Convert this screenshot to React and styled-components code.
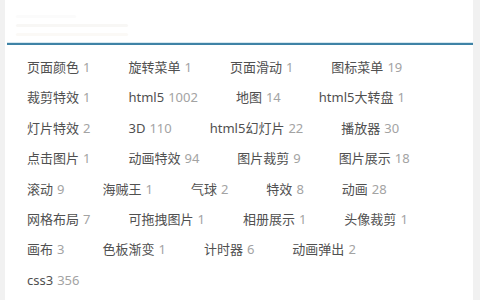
import React from 'react'
import styled, { createGlobalStyle } from 'styled-components'

const GlobalStyle = createGlobalStyle`
  html, body {
    margin: 0;
    padding: 0;
    background: #f1f1f1;
    font-family: "Noto Sans", "Noto Sans CJK SC", sans-serif;
  }
`;

const Panel = styled.div`
  margin: 0 7px 0 5px;
  height: 300px;
  background: #fff;
  overflow: hidden;
`;

const Header = styled.div`
  height: 43px;
  padding: 15px 0 0 11px;
  box-sizing: border-box;
  display: flex;
  flex-direction: column;
  gap: 6px;
`;

const FadedBar = styled.div`
  height: 3px;
  width: ${p => p.$w}px;
  background: ${p => p.$c};
  border-radius: 2px;
`;

const Divider = styled.div`
  margin-left: 2px;
  height: 2px;
  background: #3f83a6;
  box-shadow: 0 -1px 0 #d6e7ef;
`;

const TagList = styled.div`
  padding: 7px 13px 0 22px;
  line-height: 30.4px;
  font-size: 13px;
`;

const Tag = styled.a`
  display: inline-block;
  margin-right: 38px;
  color: #505050;
  text-decoration: none;
  white-space: nowrap;
`;

const Count = styled.span`
  color: #a3a3a3;
  margin-left: 4px;
`;

const tags = [
  ['页面颜色', 1], ['旋转菜单', 1], ['页面滑动', 1], ['图标菜单', 19],
  ['裁剪特效', 1], ['html5', 1002], ['地图', 14], ['html5大转盘', 1],
  ['灯片特效', 2], ['3D', 110], ['html5幻灯片', 22], ['播放器', 30],
  ['点击图片', 1], ['动画特效', 94], ['图片裁剪', 9], ['图片展示', 18],
  ['滚动', 9], ['海贼王', 1], ['气球', 2], ['特效', 8], ['动画', 28],
  ['网格布局', 7], ['可拖拽图片', 1], ['相册展示', 1], ['头像裁剪', 1],
  ['画布', 3], ['色板渐变', 1], ['计时器', 6], ['动画弹出', 2],
  ['css3', 356],
];

const App = () => {
  return (
    <>
      <GlobalStyle />
      <Panel>
        <Header>
          <FadedBar $w={60} $c="#fbfbfb" />
          <FadedBar $w={112} $c="#f8f7f5" />
          <FadedBar $w={112} $c="#fbf9f6" />
        </Header>
        <Divider />
        <TagList>
          {tags.map(([name, n]) => (
            <Tag key={name} href="#">
              {name}<Count>{n}</Count>
            </Tag>
          ))}
        </TagList>
      </Panel>
    </>
  )
}

export default App
